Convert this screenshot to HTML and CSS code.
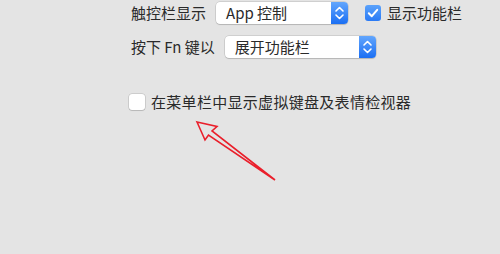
FILE: index.html
```html
<!DOCTYPE html>
<html lang="zh-CN">
<head>
<meta charset="utf-8">
<link rel="stylesheet" href="styles.css">
</head>
<body>
<div class="panel">
  <div class="row row1">
    <span class="label">触控栏显示</span>
    <div class="popup popup1">
      <span class="popup-text">App 控制</span>
      <span class="stepper"><svg width="17" height="22" viewBox="0 0 17 22"><path d="M5 9 L8.5 5.5 L12 9" /><path d="M5 13 L8.5 16.5 L12 13" /></svg></span>
    </div>
    <span class="check checked"><svg width="16" height="16" viewBox="0 0 16 16"><path d="M3.8 8.2 L6.8 11.2 L12.2 4.8" /></svg></span>
    <span class="check-label">显示功能栏</span>
  </div>
  <div class="row row2">
    <span class="label">按下 Fn 键以</span>
    <div class="popup popup2">
      <span class="popup-text">展开功能栏</span>
      <span class="stepper"><svg width="17" height="22" viewBox="0 0 17 22"><path d="M5 9 L8.5 5.5 L12 9" /><path d="M5 13 L8.5 16.5 L12 13" /></svg></span>
    </div>
  </div>
  <div class="row row3">
    <span class="check"></span>
    <span class="check-label wide">在菜单栏中显示虚拟键盘及表情检视器</span>
  </div>
</div>
<svg class="arrow" width="500" height="254" viewBox="0 0 500 254">
  <polygon points="197,122 217,126.5 212,131 275,180 208.5,135 205,140" />
</svg>
</body>
</html>
```

FILE: styles.css
```css
html, body {
  margin: 0;
  padding: 0;
}
body {
  width: 500px;
  height: 254px;
  overflow: hidden;
  background: #e4e4e4;
  font-family: "Noto Sans CJK SC", "Noto Sans", sans-serif;
  font-size: 15px;
  color: #2a2a2a;
  position: relative;
}
.panel {
  padding: 2px 0 0 129px;
}
.row {
  display: flex;
  align-items: center;
  height: 22px;
}
.row1, .row2 {
  padding-left: 2px;
}
.row2 {
  margin-top: 12px;
}
.row3 {
  margin-top: 36px;
  height: 16px;
}
.label {
  white-space: pre;
  margin-right: 10px;
  line-height: 22px;
}
.popup {
  height: 22px;
  box-sizing: border-box;
  background: #fff;
  border-radius: 4px;
  box-shadow: 0 0 0 0.5px rgba(0,0,0,0.18), 0 1px 1px rgba(0,0,0,0.12);
  display: flex;
  align-items: center;
  justify-content: space-between;
  overflow: hidden;
}
.popup1 {
  width: 132px;
}
.popup2 {
  width: 151px;
}
.popup-text {
  padding-left: 10px;
  line-height: 22px;
  white-space: pre;
}
.stepper {
  width: 17px;
  height: 22px;
  background: linear-gradient(#62a6fd, #1b6ff3);
  display: block;
}
.stepper svg {
  display: block;
}
.stepper path {
  fill: none;
  stroke: #fff;
  stroke-width: 1.6;
  stroke-linecap: round;
  stroke-linejoin: round;
}
.check {
  width: 16px;
  height: 16px;
  box-sizing: border-box;
  border-radius: 3px;
  background: #fff;
  box-shadow: 0 0 0 0.5px rgba(0,0,0,0.2), 0 1px 1px rgba(0,0,0,0.1);
  flex: none;
}
.check svg {
  display: block;
}
.row1 .check {
  margin-left: 17px;
}
.check.checked {
  background: linear-gradient(#5ba2fb, #2a7af5);
  box-shadow: none;
}
.check path {
  fill: none;
  stroke: #fff;
  stroke-width: 2;
  stroke-linecap: round;
  stroke-linejoin: round;
}
.check-label {
  margin-left: 6px;
  line-height: 22px;
  white-space: nowrap;
}
.check-label.wide {
  letter-spacing: 0.3px;
}
.arrow {
  position: absolute;
  left: 0;
  top: 0;
}
.arrow polygon {
  fill: none;
  stroke: #ea1f2b;
  stroke-width: 1.6;
  stroke-linejoin: miter;
}
```
